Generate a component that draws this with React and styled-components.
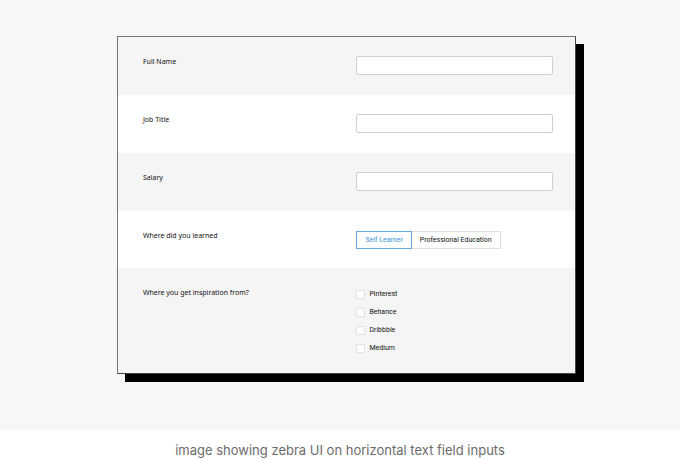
import React, { useState } from 'react';
import styled, { createGlobalStyle } from 'styled-components';

const GlobalStyle = createGlobalStyle`
  * { box-sizing: border-box; }
  body { margin: 0; background: #fff; }
`;

const Figure = styled.figure`
  margin: 0;
`;

const Stage = styled.div`
  padding: 36px 15.3% 56px 17.2%;
  background: #f7f7f7;
`;

const Card = styled.form`
  border: 1px solid #777;
  border-right-color: #444;
  border-bottom-color: #444;
  box-shadow: 8px 8px 0 #000;
  font-family: Roboto, 'Liberation Sans', sans-serif;
  font-size: 7px;
  line-height: 10px;
  color: #111;
`;

const Row = styled.div`
  display: grid;
  grid-template-columns: 214fr 197fr;
  align-items: start;
  padding: 19px 22px ${(p) => (p.$compact ? '19px' : '20px')} 25px;
  background: #fff;

  &:nth-child(odd) { background: #f5f5f5; }
`;

const Label = styled.label`
  padding-top: 1px;
  font-family: 'Noto Sans', sans-serif;
  font-size: 7px;
  line-height: 10px;
`;

const TextInput = styled.input`
  width: 100%;
  height: 19px;
  padding: 0 6px;
  border: 1px solid #cfcfcf;
  border-radius: 2px;
  background: #fff;
  font: inherit;
`;

const Segments = styled.div`
  display: flex;
  padding-top: 1px;
`;

const Segment = styled.button`
  height: 18px;
  padding: 0 8px;
  border: 1px solid ${(p) => (p.$active ? '#62a8e5' : '#e0e0e0')};
  border-left-width: ${(p) => (p.$active ? '1px' : '0')};
  background: #fff;
  color: ${(p) => (p.$active ? '#3b93dc' : '#111')};
  font: inherit;
`;

const Choices = styled.div`
  display: grid;
  gap: 8px;
  padding: 2px 0 1px;
`;

const Choice = styled.label`
  display: flex;
  align-items: center;
  gap: 4px;
`;

const Tick = styled.input`
  appearance: none;
  width: 9px;
  height: 9px;
  margin: 0;
  border: 1px solid #e2e2e2;
  border-radius: 1px;
  background: #fff;

  &:checked { background: #3b93dc; }
`;

const Caption = styled.figcaption`
  padding: 10px 16px 0;
  font-family: Inter, 'Liberation Sans', sans-serif;
  font-size: 13px;
  line-height: 20px;
  text-align: center;
  color: #6b6b6b;
`;

const fields = [
  { id: 'name', label: 'Full Name' },
  { id: 'title', label: 'Job Title' },
  { id: 'salary', label: 'Salary' },
];
const schools = ['Self Learner', 'Professional Education'];
const sources = ['Pinterest', 'Behance', 'Dribbble', 'Medium'];

export default function App() {
  const [school, setSchool] = useState(schools[0]);
  return (
    <Figure>
      <GlobalStyle />
      <Stage>
        <Card>
          {fields.map((f) => (
            <Row key={f.id}>
              <Label htmlFor={f.id}>{f.label}</Label>
              <TextInput id={f.id} type="text" />
            </Row>
          ))}
          <Row $compact>
            <Label as="span" id="school">Where did you learned</Label>
            <Segments role="group" aria-labelledby="school">
              {schools.map((s) => (
                <Segment
                  key={s}
                  type="button"
                  $active={s === school}
                  aria-pressed={s === school}
                  onClick={() => setSchool(s)}
                >
                  {s}
                </Segment>
              ))}
            </Segments>
          </Row>
          <Row $compact>
            <Label as="span" id="sources">Where you get inspiration from?</Label>
            <Choices role="group" aria-labelledby="sources">
              {sources.map((s) => (
                <Choice key={s}>
                  <Tick type="checkbox" />
                  {s}
                </Choice>
              ))}
            </Choices>
          </Row>
        </Card>
      </Stage>
      <Caption>image showing zebra UI on horizontal text field inputs</Caption>
    </Figure>
  );
}
